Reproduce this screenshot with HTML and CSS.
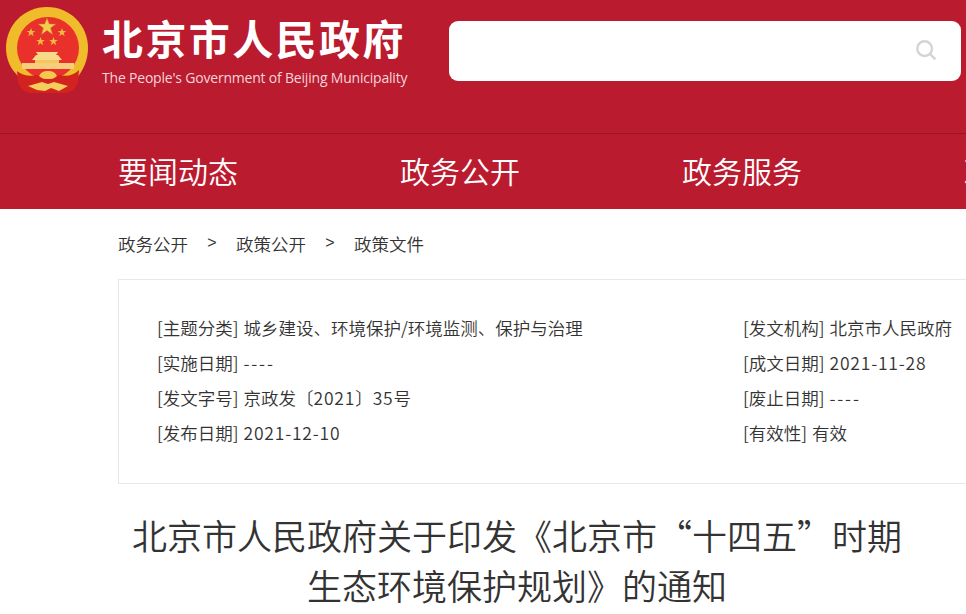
FILE: index.html
```html
<!DOCTYPE html>
<html lang="zh-CN">
<head>
    <meta charset="UTF-8">
    <meta name="viewport" content="width=device-width, initial-scale=1.0">
    <title>北京市人民政府关于印发《北京市“十四五”时期生态环境保护规划》的通知</title>
    <link rel="stylesheet" href="styles.css">
</head>
<body>
<header>
    <div class="top">
        <svg class="emblem" viewBox="0 0 100 100" aria-hidden="true">
            <path d="M20 78C10 69 6 59 6 48 6 25 24 7 47 7s41 18 41 41c0 11-4 21-11 30z" fill="#f0bc2c"/>
            <circle cx="48" cy="48" r="31" fill="#e9302a"/>
            <path d="M47 18l2.300 6h6.500l-5.200 4 2 6.400-5.600-3.800-5.600 3.800 2-6.400-5.200-4h6.500z" fill="#f4cd4c" stroke="#b9802a" stroke-width=".5"/>
            <path d="M31 28l1.100 3h3.200l-2.600 2 1 3.200-2.700-1.900-2.700 1.900 1-3.200-2.600-2h3.200z" fill="#eeb93f"/>
            <path d="M62 28l1.100 3h3.200l-2.600 2 1 3.200-2.700-1.900-2.700 1.900 1-3.200-2.600-2h3.200z" fill="#eeb93f"/>
            <path d="M40.500 37l1.100 3h3.200l-2.600 2 1 3.200-2.700-1.900-2.700 1.900 1-3.200-2.600-2h3.200z" fill="#eeb93f"/>
            <path d="M53.500 37l1.100 3h3.200l-2.600 2 1 3.200-2.700-1.900-2.700 1.900 1-3.200-2.600-2h3.200z" fill="#eeb93f"/>
            <path d="M36 52h22l-2 3h2l4 5H32l4-5h2z" fill="#f8d98a"/>
            <path d="M35 60h24v3H35z" fill="#f5c65c"/>
            <path d="M22 63h52v6H22z" fill="#f7cf7a"/>
            <path d="M17 71c5 4 12 6 19 4l12 3 12-3c7 2 14 0 19-5l-1 12c-2 6-6 10-12 11H30c-6-1-10-5-12-11z" fill="#d3231e"/>
            <path d="M39 76c2-4 5-5 9-5s7 1 9 5c-3 3-6 3-9 3s-6 0-9-3z" fill="#f5c94e"/>
            <path d="M28 86l14-4 6 2 6-2 14 4-9 5-8-3-6 3-8-1z" fill="#f4cd5a"/>
        </svg>
        <div class="brand">
            <div class="brand-name">北京市人民政府</div>
            <div class="brand-en">The People's Government of Beijing Municipality</div>
        </div>
        <div class="search">
            <svg class="search-icon" viewBox="0 0 24 24" aria-hidden="true">
                <circle cx="10.500" cy="10.500" r="8" fill="none" stroke="#d4d4d4" stroke-width="2.600"/>
                <path d="M16.500 16.500l5 5" fill="none" stroke="#d4d4d4" stroke-width="2.600" stroke-linecap="round"/>
            </svg>
        </div>
    </div>
    <nav>
        <a href="#">要闻动态</a>
        <a href="#">政务公开</a>
        <a href="#">政务服务</a>
        <a href="#">政民互动</a>
    </nav>
</header>
<main>
    <div class="crumbs">
        <a href="#">政务公开</a>
        <span>&gt;</span>
        <a href="#">政策公开</a>
        <span>&gt;</span>
        <a href="#">政策文件</a>
    </div>
    <div class="info">
        <div class="info-col">
            <p>[主题分类] 城乡建设、环境保护/环境监测、保护与治理</p>
            <p>[实施日期] <span class="dash">----</span></p>
            <p>[发文字号] 京政发〔<span class="num">2021</span>〕<span class="num">35</span>号</p>
            <p>[发布日期] <span class="num">2021-12-10</span></p>
        </div>
        <div class="info-col">
            <p>[发文机构] 北京市人民政府</p>
            <p>[成文日期] <span class="num">2021-11-28</span></p>
            <p>[废止日期] <span class="dash">----</span></p>
            <p>[有效性] 有效</p>
        </div>
    </div>
    <h1>北京市人民政府关于印发《北京市“十四五”时期<br>生态环境保护规划》的通知</h1>
</main>
</body>
</html>
```

FILE: styles.css
```css
html, body {
    margin: 0;
    padding: 0;
    overflow: hidden;
    height: 614px;
}
body {
    width: 1280px;
    font-family: "Noto Sans CJK SC", "Noto Sans", sans-serif;
    font-weight: 350;
    background-color: #fff;
    color: #333;
}
a {
    color: inherit;
    text-decoration: none;
}
header {
    background-color: #bb1b2f;
}
.top {
    display: flex;
    align-items: flex-start;
    height: 133px;
    border-bottom: 1px solid #9c1326;
}
.emblem {
    width: 100px;
    height: 100px;
    flex-shrink: 0;
}
.brand {
    margin-left: 2px;
    width: 347px;
    color: #fff;
}
.brand-name {
    font-size: 41px;
    font-weight: 700;
    line-height: 50px;
    letter-spacing: 2.400px;
    margin-top: 12px;
}
.brand-en {
    font-family: "Open Sans", sans-serif;
    font-weight: 400;
    font-size: 14px;
    line-height: 20px;
    margin-top: 6px;
    letter-spacing: -.2px;
    color: #f3d5d9;
    white-space: nowrap;
}
.search {
    display: flex;
    align-items: center;
    justify-content: flex-end;
    width: 512px;
    height: 60px;
    margin-top: 21px;
    padding: 0 24px 2px 0;
    box-sizing: border-box;
    background-color: #fff;
    border-radius: 9px;
}
.search-icon {
    width: 22px;
    height: 22px;
}
nav {
    display: flex;
    height: 75px;
    padding-left: 118px;
}
nav a {
    width: 282px;
    font-size: 30px;
    line-height: 73px;
    color: #fff;
}
main {
    padding: 0 0 0 118px;
}
.crumbs {
    display: flex;
    gap: 18px;
    height: 68px;
    margin-bottom: 2px;
    align-items: center;
    font-size: 17.500px;
}
.crumbs span {
    width: 12px;
    text-align: center;
    font-family: "Liberation Sans", sans-serif;
    font-size: 16px;
}
.info {
    display: flex;
    width: 1000px;
    height: 205px;
    padding: 30px 0 0 38px;
    box-sizing: border-box;
    border: 1px solid #e8e8e4;
    font-size: 17.500px;
    word-spacing: 1px;
}
.info-col {
    flex: none;
    width: 586px;
}
.info-col p {
    margin: 0;
    height: 35px;
    line-height: 35px;
    white-space: nowrap;
}
.num {
    letter-spacing: .8px;
}
.dash {
    letter-spacing: 1.800px;
}
h1 {
    width: 798px;
    margin: 26px 0 0;
    font-size: 35px;
    font-weight: 350;
    line-height: 50px;
    text-align: center;
}
```
